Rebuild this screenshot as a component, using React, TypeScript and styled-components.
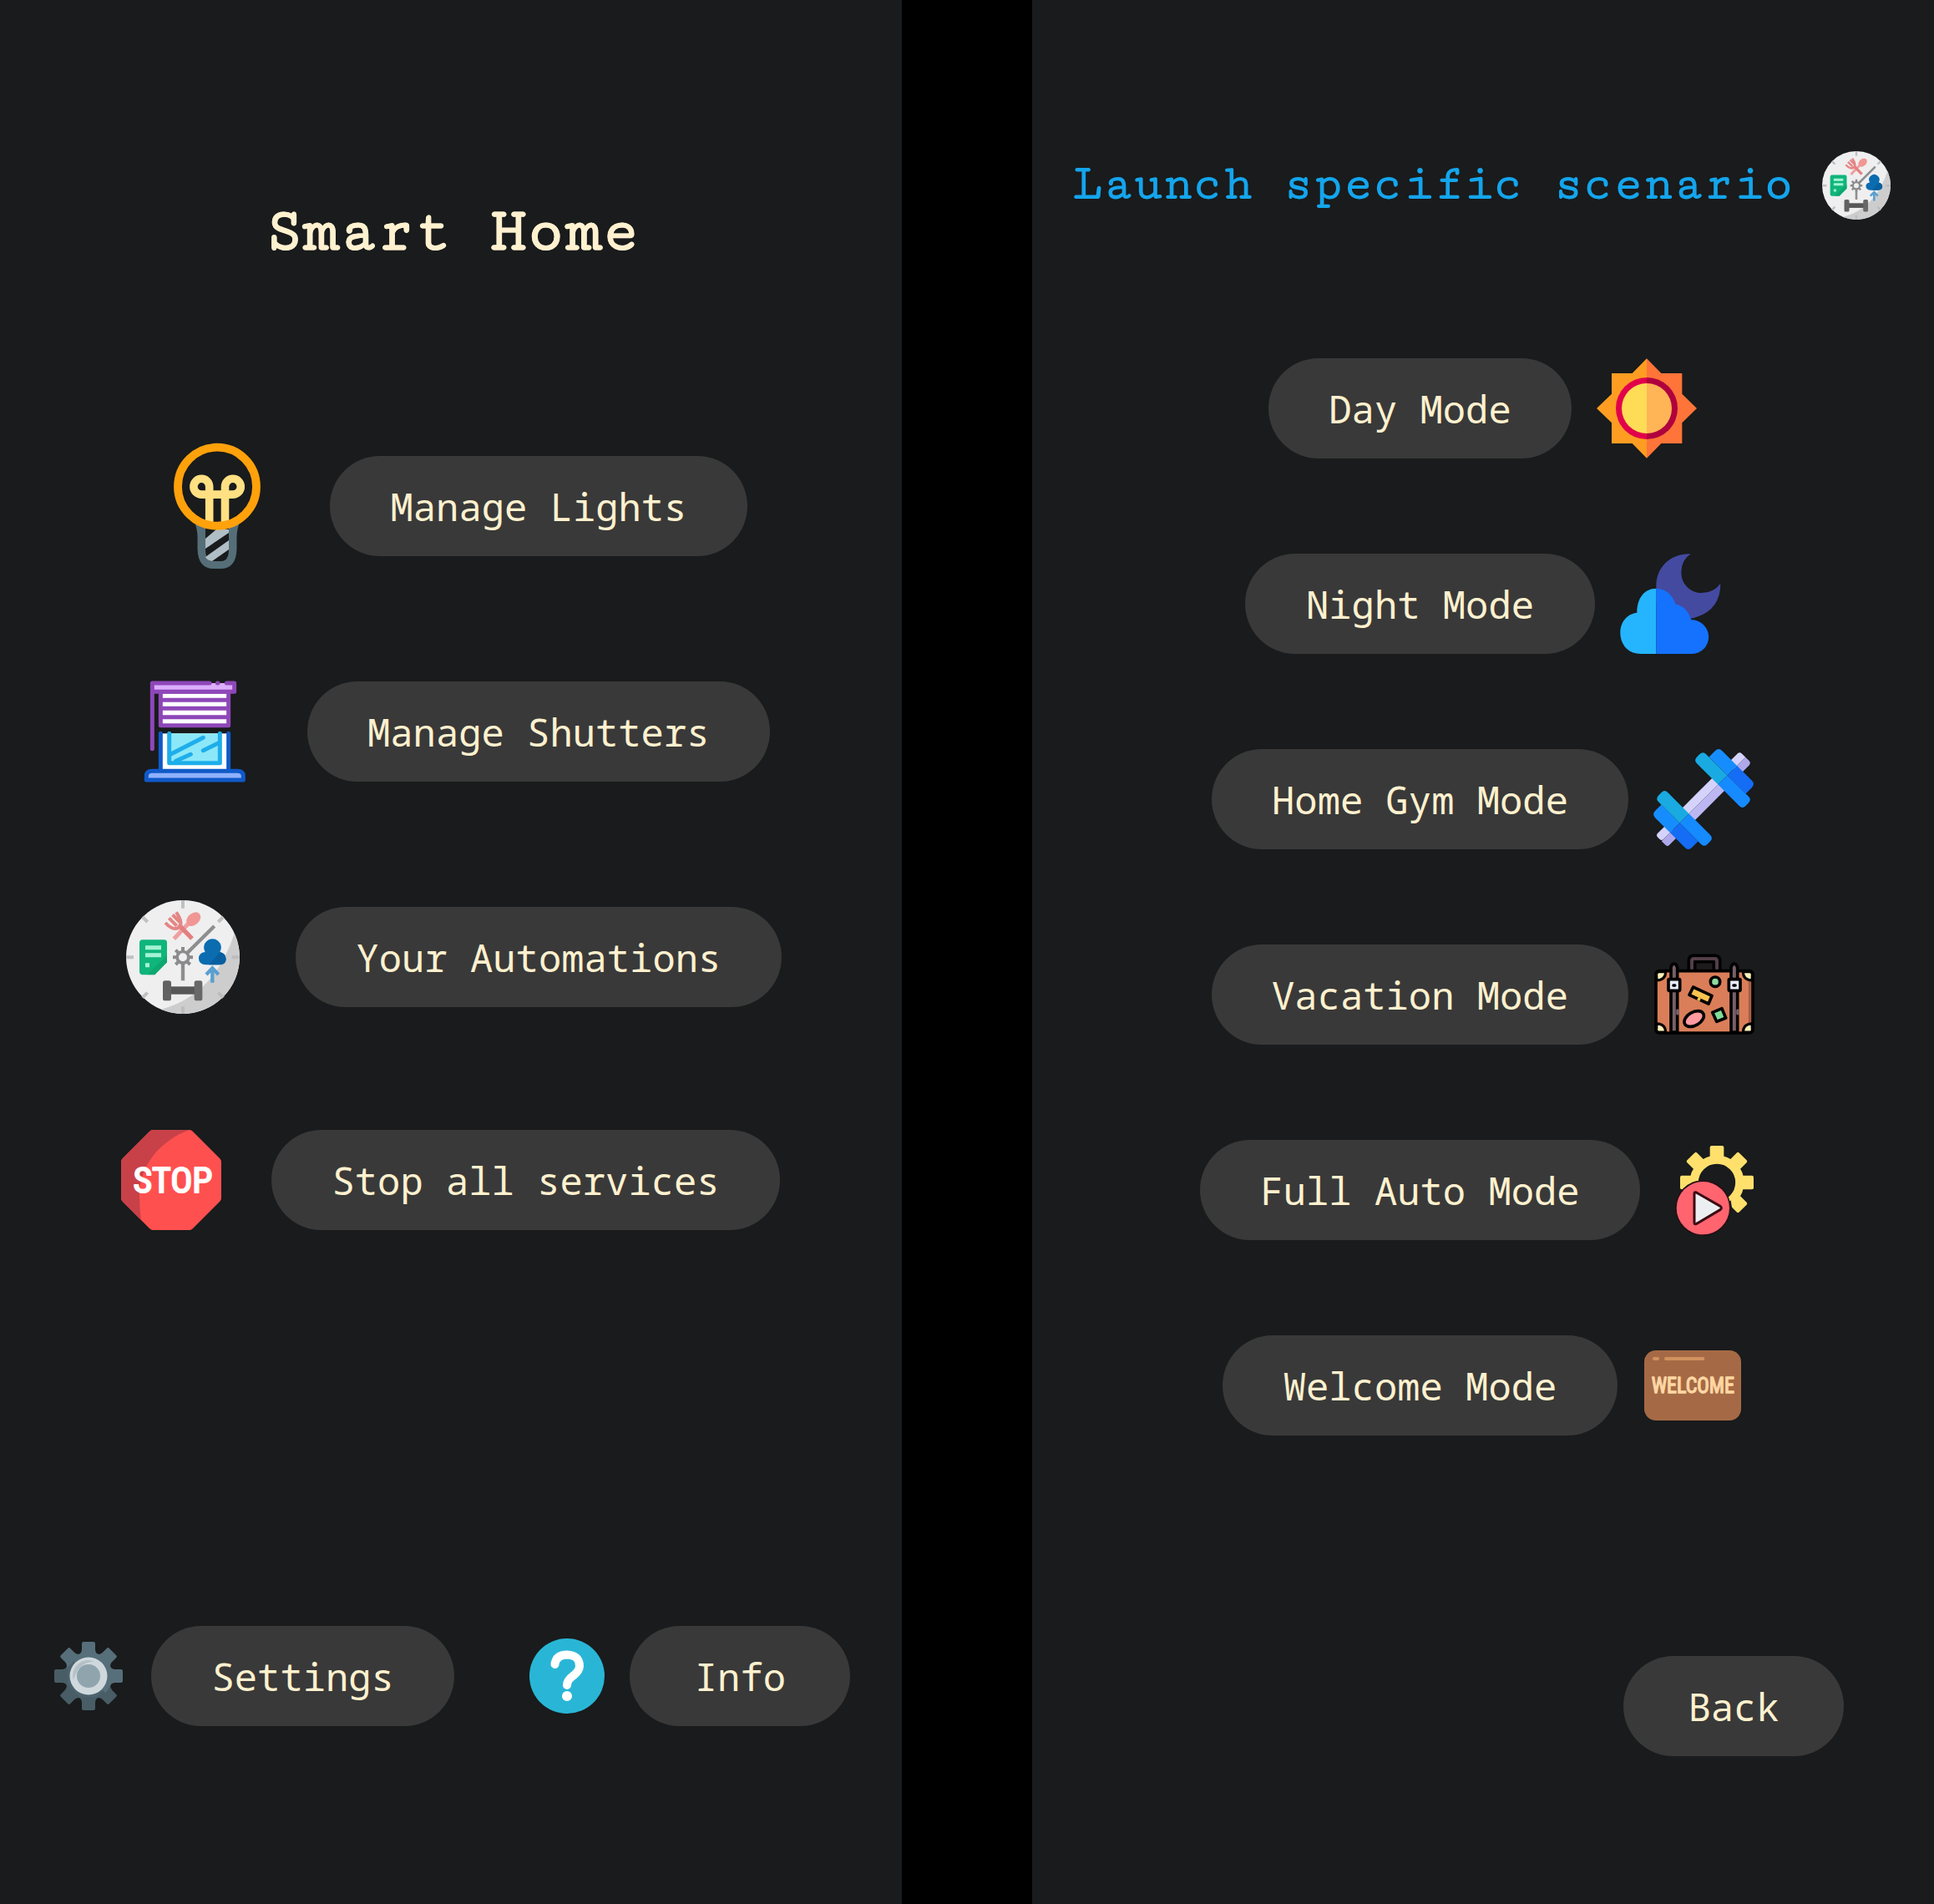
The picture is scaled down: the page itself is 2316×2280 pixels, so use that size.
import React from 'react';
import styled, { createGlobalStyle } from 'styled-components';

const Global = createGlobalStyle`
  *, *::before, *::after { box-sizing: border-box; }
  body { margin: 0; background: #000; }
`;

const Stage = styled.main`
  display: flex;
  justify-content: space-between;
  width: 2316px;
  height: 2280px;
  background: #000;
`;

const Screen = styled.section`
  display: flex;
  flex-direction: column;
  width: 1080px;
  height: 2280px;
  background: #191b1c;
`;

const HomeTitle = styled.h1`
  margin: 228px 0 0;
  padding-left: 3px;
  height: 100px;
  line-height: 100px;
  text-align: center;
  white-space: nowrap;
  font-family: 'Cutive Mono', 'Liberation Mono', monospace;
  font-size: 74.2px;
  font-weight: 700;
  color: #fff1cf;
  -webkit-text-stroke: 0.8px #fff1cf;
`;

const ScenarioHeader = styled.header`
  display: flex;
  align-items: center;
  gap: 36px;
  margin-top: 181px;
  padding-left: 49px;
  height: 82px;
`;

const ScenarioTitle = styled.h1`
  margin: 0;
  width: 861px;
  height: 82px;
  line-height: 80px;
  white-space: nowrap;
  font-family: 'Cutive Mono', 'Liberation Mono', monospace;
  font-size: 59.4px;
  font-weight: 700;
  font-variant-ligatures: none;
  color: #14a5ec;
`;

const HomeMenu = styled.nav`
  display: flex;
  flex-direction: column;
  margin-top: 203px;
`;

const MenuRow = styled.div<{ $height: number; $left: number; $gap: number; $top?: number }>`
  display: flex;
  align-items: center;
  gap: ${p => p.$gap}px;
  height: ${p => p.$height}px;
  margin-top: ${p => p.$top ?? 0}px;
  padding-left: ${p => p.$left}px;
`;

const ModeList = styled.nav`
  display: flex;
  flex-direction: column;
  gap: 114px;
  margin-top: 166px;
`;

const ModeRow = styled.div`
  display: flex;
  align-items: center;
  justify-content: center;
  gap: 30px;
  height: 120px;
  padding-right: 1px;
`;

const Pill = styled.button`
  flex: none;
  height: 120px;
  min-width: 264px;
  padding: 1px 72.5px 0;
  border: 0;
  border-radius: 60px;
  background: #393939;
  color: #fff1cf;
  font-family: 'Noto Sans Mono', 'DejaVu Sans Mono', monospace;
  font-size: 45.5px;
  line-height: 1;
  text-align: center;
  white-space: nowrap;
`;

const Footer = styled.footer`
  display: flex;
  align-items: center;
  height: 120px;
  margin-top: 474px;
  padding-left: 65px;
`;

const FooterItem = styled.div<{ $gap: number; $left?: number }>`
  display: flex;
  align-items: center;
  gap: ${p => p.$gap}px;
  margin-left: ${p => p.$left ?? 0}px;
`;

const BackBar = styled.footer`
  display: flex;
  justify-content: flex-end;
  margin-top: 264px;
  padding-right: 108px;
`;

const Icon = styled.svg<{ $w: number; $h?: number }>`
  display: block;
  flex: none;
  width: ${p => p.$w}px;
  height: ${p => p.$h ?? p.$w}px;
  overflow: visible;
`;

const SignText = styled.text`
  font-family: 'Roboto Condensed', Roboto, 'Liberation Sans', sans-serif;
  font-weight: 400;
  stroke-linejoin: round;
`;

const BulbIcon = () => (
  <Icon $w={104} $h={150} viewBox="0 0 104 150" fill="none">
    <path d="M24 92Q28.500 102 28.500 112V126Q29 150 48 150H56Q75 150 75.500 126V112Q75.500 102 80 92L66 99V126Q66 141 57 141H47Q38 141 38 126V99Z" fill="#566e78" />
    <path d="M51 103H66V107L38 126V114ZM66 116V127L46 141Q40 140 38 136Z" fill="#b0bec5" />
    <path d="M42.7 95V51.7a9.4 9.4 0 1 0-9.4 9.4H70.9a9.4 9.4 0 1 0-9.4-9.4V95" stroke="#ffe082" strokeWidth="9.6" />
    <circle cx="52" cy="51.7" r="47" stroke="#ffa10b" strokeWidth="9.8" />
  </Icon>
);

const ShutterIcon = () => (
  <Icon $w={120} viewBox="69 48 360 360" fill="none" strokeLinecap="round" strokeLinejoin="round">
    <rect x="127" y="235" width="244" height="132" fill="#fff" />
    <path d="M158 235H340V341H158Z" fill="#8ce8f8" />
    <path d="M164 309L280 250M182 334L235 310M280 296L338 268" stroke="#1eaeea" strokeWidth="15" />
    <path d="M158 235V341H340V235" stroke="#1eaeea" strokeWidth="15" />
    <path d="M127 235V368M371 235V368" stroke="#1059c8" strokeWidth="15" />
    <path d="M76 402V388Q76 370 96 370H403Q424 370 424 388V402Z" fill="#8fb1ff" stroke="#1059c8" strokeWidth="15" />
    <rect x="127" y="85" width="244" height="121" fill="#fff" stroke="#8e47b8" strokeWidth="15" />
    <path d="M130 115H368M130 145H368M130 176H368" stroke="#8e47b8" strokeWidth="15" />
    <path d="M98 54H392V85H98Z" fill="#dcaeff" />
    <path d="M97 290V54H303M364 54H392V85H100M331 54H333" stroke="#8e47b8" strokeWidth="15" />
  </Icon>
);

const AutomationIcon = ({ size }: { size: number }) => (
  <Icon $w={size} viewBox="33 23 408 408">
    <circle cx="237" cy="227" r="204" fill="#efeff0" />
    <path d="M422 142A204 204 0 0 1 158 415Q350 365 422 142Z" fill="#cdcdce" />
    <g stroke="#bfc0c2" strokeWidth="12">
      <path d="M237 23V52M33 228H60M92 83L110 101M382 83L364 101M92 373L110 355" />
      <path d="M237 405V431M413 228H440M364 355L382 373" stroke="#bdbdbe" />
    </g>
    <path d="M237 228L350 116M237 228V312" stroke="#8e8e90" strokeWidth="13" />
    <circle cx="237" cy="228" r="26" fill="#efeff0" />
    <circle cx="237" cy="228" r="20.500" fill="none" stroke="#8b8b8d" strokeWidth="11" />
    <g stroke="#8b8b8d" strokeWidth="12">
      <path d="M237 191V206M237 250V265M201 228H216M258 228H273M211 202L222 213M252 243L263 254M211 254L222 243M252 213L263 202" />
    </g>
    <path d="M205 162L256 108" stroke="#f09f9f" strokeWidth="15" />
    <ellipse cx="275" cy="91" rx="29" ry="21" transform="rotate(-42 275 91)" fill="#f09795" />
    <path d="M222 111L270 161" stroke="#e2807f" strokeWidth="16" />
    <g fill="none" stroke="#e58584" strokeWidth="12">
      <path d="M174 104Q201 133 221 122Q241 106 213 66M187 87L215 115M200 75L226 102" />
    </g>
    <path d="M92 165H170Q180 165 180 176V246L136 291H93Q81 291 81 279V177Q81 165 92 165Z" fill="#10b57c" />
    <path d="M180 222V246L136 291H108Z" fill="#0b9c65" opacity=".55" />
    <path d="M102 186H159V201H102ZM102 213H159V228H102ZM102 249H117V264H102Z" fill="#a3f3d4" />
    <path d="M320 255Q294 253 294 232Q294 212 317 209A31 31 0 1 1 370 209Q392 214 392 235Q391 254 366 255Z" fill="#0b6cb0" />
    <path d="M392 235Q391 254 366 255H330Q345 240 370 209Q392 214 392 235Z" fill="#075f9f" />
    <path d="M343 319V268M321 290L343 267L365 290" fill="none" stroke="#5a9fd0" strokeWidth="13" />
    <rect x="190" y="333" width="95" height="28" fill="#575757" />
    <rect x="165" y="312" width="30" height="72" rx="8" fill="#626262" />
    <rect x="278" y="312" width="29" height="72" rx="8" fill="#686868" />
  </Icon>
);

const StopIcon = () => (
  <Icon $w={120} viewBox="0 0 120 120">
    <path d="M38 0H82Q84 0 86 2L118 34Q120 36 120 38V82Q120 84 118 86L86 118Q84 120 82 120H38Q36 120 34 118L2 86Q0 84 0 82V38Q0 36 2 34L34 2Q36 0 38 0Z" fill="#ff5050" />
    <path d="M38 0H82C48 12 22 42 22 78Q22 94 24 108L2 86Q0 84 0 82V38Q0 36 2 34L34 2Q36 0 38 0Z" fill="#c84148" />
    <SignText x="14.500" y="75" fontSize="42" textLength="95" lengthAdjust="spacingAndGlyphs" fill="#fff" stroke="#fff" strokeWidth="2">STOP</SignText>
  </Icon>
);

const SettingsIcon = () => (
  <Icon $w={82} viewBox="-41 -41 82 82">
    <circle r="28.500" fill="#4c636d" />
    {[0, 45, 90, 135, 180, 225, 270, 315].map(a => (
      <path
        key={a}
        d="M-12 -25Q-8 -28 -8 -32V-39Q-8 -41 -6 -41H6Q8 -41 8 -39V-32Q8 -28 12 -25Z"
        transform={`rotate(${a})`}
        fill={a > 90 && a < 315 ? '#485d66' : '#566f7a'}
      />
    ))}
    <path d="M-20.200 -20.200A28.500 28.500 0 0 1 20.200 20.200Z" fill="#566f7a" />
    <circle r="22.500" fill="#cfd8dc" />
    <path d="M-18 5A18.500 18.500 0 0 1 7 -17.500Q-12 -17 -18 5Z" fill="#b4c1c7" />
    <circle r="14" fill="#90a4ad" />
  </Icon>
);

const InfoIcon = () => (
  <Icon $w={90} viewBox="0 0 90 90">
    <circle cx="45" cy="45" r="45" fill="#29b6d6" />
    <path d="M30.500 31Q32 19.500 45 19.500Q60 20 60 33Q60 39 52 45Q45 50 45 56" fill="none" stroke="#fff" strokeWidth="10" strokeLinecap="round" />
    <circle cx="45" cy="69" r="6" fill="#fff" />
  </Icon>
);

const SunIcon = () => (
  <Icon $w={120} viewBox="36 27 360 360">
    <path d="M216 28L164 81H90V155L36 207L90 259V333H164L216 386Z" fill="#ff9d22" />
    <path d="M216 28L268 81H343V155L396 207L343 259V333H268L216 386Z" fill="#ff7438" />
    <path d="M216 96A111 111 0 0 0 216 318Z" fill="#e2004b" />
    <path d="M216 96A111 111 0 0 1 216 318Z" fill="#b0003e" />
    <path d="M216 117A90 90 0 0 0 216 297Z" fill="#ffdc56" />
    <path d="M216 117A90 90 0 0 1 216 297Z" fill="#ffb556" />
  </Icon>
);

const NightIcon = () => (
  <Icon $w={120} viewBox="119 729 360 360">
    <path d="M373 730Q338 753 339 798A72 72 0 0 0 411 870Q455 870 480 836Q480 938 375 962L249 900V845C249 775 303 728 373 730Z" fill="#434aa0" />
    <path d="M249 854C205 854 180 890 180 941C143 945 120 976 120 1013C120 1058 150 1089 193 1089H249Z" fill="#25b5ff" />
    <path d="M249 854Q300 856 318 910Q358 918 375 967A61 61 0 0 1 378 1089H249Z" fill="#1572ff" />
  </Icon>
);

const GymIcon = () => (
  <Icon $w={120} viewBox="63 51 360 360">
    <g transform="translate(243 231) rotate(-45) scale(1.025)">
      <rect x="-208" y="-29" width="60" height="29" rx="10" fill="#d5d2fb" />
      <path d="M-208 0H-148V29H-198Q-208 29 -208 19Z" fill="#aea8ea" />
      <path d="M148 -29H196Q208 -29 208 -17V0H148Z" fill="#d5d2fb" />
      <path d="M148 0H208V17Q208 29 196 29H148Z" fill="#aea8ea" />
      <rect x="-75" y="-31" width="150" height="31" fill="#d5d2fb" />
      <rect x="-75" y="0" width="150" height="31" fill="#bcb7f0" />
      <path d="M-118 -91H-148Q-166 -91 -166 -73V0H-118Z" fill="#168dff" />
      <path d="M-118 91H-148Q-166 91 -166 73V0H-118Z" fill="#146df4" />
      <path d="M-118 -106Q-118 -121 -101 -121H-88Q-72 -121 -72 -105V0H-118Z" fill="#19aae2" />
      <path d="M-118 106Q-118 121 -101 121H-88Q-72 121 -72 105V0H-118Z" fill="#168aff" />
      <path d="M118 -91H148Q166 -91 166 -73V0H118Z" fill="#168dff" />
      <path d="M118 91H148Q166 91 166 73V0H118Z" fill="#146df4" />
      <path d="M118 -106Q118 -121 101 -121H88Q72 -121 72 -105V0H118Z" fill="#19aae2" />
      <path d="M118 106Q118 121 101 121H88Q72 121 72 105V0H118Z" fill="#168aff" />
    </g>
  </Icon>
);

const SuitcaseIcon = () => (
  <Icon $w={120} viewBox="60 33 360 360" stroke="#000" strokeWidth="11" strokeLinejoin="round" strokeLinecap="round">
    <path d="M187 126V92Q187 73 205 73H281Q299 73 299 92V126" fill="#54404a" />
    <path d="M209 126V95H277V126" fill="#1f1b1d" />
    <path d="M198 120V92Q198 84 206 84H280Q288 84 288 92V120" fill="none" stroke="#54404a" strokeWidth="10" />
    <rect x="69" y="128" width="348" height="223" rx="12" fill="#da7e59" />
    <path d="M406 140V340" stroke="#a95c43" strokeWidth="9" />
    <path d="M72 162Q104 160 104 131H80Q71 131 71 140ZM414 162Q382 160 382 131H406Q415 131 415 140ZM72 317Q104 319 104 348H80Q71 348 71 339ZM414 317Q382 319 382 348H406Q415 348 415 339Z" fill="#fdf0b8" strokeWidth="9" />
    <path d="M123 348V116Q125 103 134 102Q143 103 146 116V348ZM339 348V116Q342 103 350 102Q359 103 362 116V348Z" fill="#766169" />
    <path d="M147 270V281M363 270V281" stroke="#766169" />
    <rect x="114" y="158" width="41" height="41" rx="3" fill="#e8ecfa" />
    <rect x="331" y="158" width="41" height="41" rx="3" fill="#e8ecfa" />
    <path d="M132 180H137M348 180H354" />
    <circle cx="282" cy="167" r="17" fill="#8edb9d" />
    <path d="M203 186L270 217L258 246L189 214Z" fill="#fbc44f" />
    <path d="M219 227L228 232" stroke="#fbc44f" strokeLinecap="butt" />
    <ellipse cx="206" cy="300" rx="38" ry="24" transform="rotate(-30 206 300)" fill="#ff9ba0" />
    <path d="M272 277L306 263L320 297L287 310Z" fill="#80dc97" />
  </Icon>
);

const AutoIcon = () => (
  <Icon $w={120} viewBox="162 15 360 360">
    <g transform="translate(348 168)">
      <circle r="82" fill="none" stroke="#ffe06c" strokeWidth="31" />
      {[0, 45, 90, 135, 270, 315].map(a => (
        <rect key={a} x="-25" y="-132" width="50" height="46" rx="6" transform={`rotate(${a})`} fill="#ffe06c" />
      ))}
    </g>
    <path d="M350 272L398 232L402 258L420 290L340 350Z" fill="#191b1c" />
    <circle cx="298" cy="260" r="100" fill="#251015" />
    <circle cx="298" cy="260" r="95" fill="#ff646f" />
    <path d="M267 208Q267 201 274 204L360 253Q368 259 360 266L275 316Q267 320 267 312Z" fill="#eceff1" stroke="#3a0c15" strokeWidth="9" strokeLinejoin="round" />
  </Icon>
);

const WelcomeIcon = () => (
  <Icon $w={120} viewBox="81 717 360 360">
    <rect x="87" y="771" width="348" height="252" rx="42" fill="#a56a45" />
    <path d="M123 801H135M165 801H298" stroke="#d2925f" strokeWidth="12" strokeLinecap="round" />
    <SignText x="113" y="924" fontSize="78" textLength="298" lengthAdjust="spacingAndGlyphs" fill="#ffd6a3" stroke="#ffd6a3" strokeWidth="4">WELCOME</SignText>
  </Icon>
);

const modes: [string, React.FC][] = [
  ['Day Mode', SunIcon],
  ['Night Mode', NightIcon],
  ['Home Gym Mode', GymIcon],
  ['Vacation Mode', SuitcaseIcon],
  ['Full Auto Mode', AutoIcon],
  ['Welcome Mode', WelcomeIcon],
];

export default function App() {
  return (
    <>
      <Global />
      <Stage>
        <Screen>
          <HomeTitle>Smart Home</HomeTitle>
          <HomeMenu>
            <MenuRow $height={150} $left={208} $gap={83}><BulbIcon /><Pill>Manage Lights</Pill></MenuRow>
            <MenuRow $height={120} $left={172.5} $gap={75} $top={135}><ShutterIcon /><Pill>Manage Shutters</Pill></MenuRow>
            <MenuRow $height={136} $left={151} $gap={67} $top={142}><AutomationIcon size={136} /><Pill>Your Automations</Pill></MenuRow>
            <MenuRow $height={120} $left={145} $gap={60} $top={139}><StopIcon /><Pill>Stop all services</Pill></MenuRow>
          </HomeMenu>
          <Footer>
            <FooterItem $gap={34}><SettingsIcon /><Pill>Settings</Pill></FooterItem>
            <FooterItem $gap={30} $left={90}><InfoIcon /><Pill>Info</Pill></FooterItem>
          </Footer>
        </Screen>
        <Screen>
          <ScenarioHeader>
            <ScenarioTitle>Launch specific scenario</ScenarioTitle>
            <AutomationIcon size={82} />
          </ScenarioHeader>
          <ModeList>
            {modes.map(([label, Glyph]) => (
              <ModeRow key={label}><Pill>{label}</Pill><Glyph /></ModeRow>
            ))}
          </ModeList>
          <BackBar><Pill>Back</Pill></BackBar>
        </Screen>
      </Stage>
    </>
  );
}
